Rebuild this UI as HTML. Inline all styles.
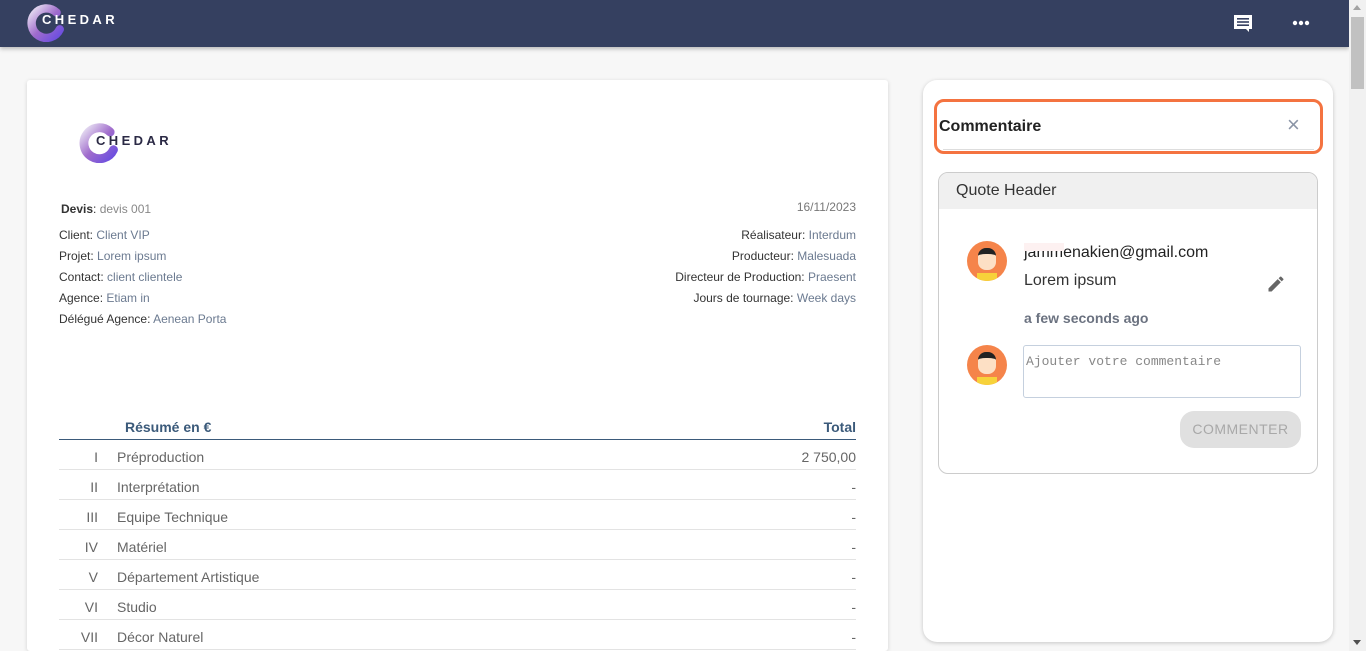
<!DOCTYPE html>
<html style="overflow:hidden;height:651px"><head><meta charset="utf-8"><style>
*{box-sizing:border-box;margin:0;padding:0}
body{width:1366px;height:651px;overflow:hidden;background:#f7f7f7;font-family:"Liberation Sans",Roboto,sans-serif;position:relative}
.hdr{position:absolute;left:0;top:0;width:1349px;height:47px;background:#354060;box-shadow:0 2px 4px rgba(0,0,0,.25)}
.sb{position:absolute;left:1349px;top:0;width:17px;height:651px;background:#f1f1f1}
.sb .th{position:absolute;left:2px;top:17px;width:13px;height:72px;background:#c1c1c1}
.card{position:absolute;left:27px;top:80px;width:861px;height:571px;background:#fff;box-shadow:0 1px 4px rgba(0,0,0,.15);border-radius:3px;overflow:hidden}
.side{position:absolute;left:923px;top:80px;width:410px;height:562px;background:#fff;border-radius:14px;box-shadow:0 1px 4px rgba(0,0,0,.2)}
.t{position:absolute;font-size:12px;color:#333;white-space:nowrap}
.t span{color:#6b7a90}
.row{position:absolute;left:32px;width:797px;height:30px;border-bottom:1px solid #e3e3e3;font-size:14px;color:#666}
.row .n{position:absolute;right:758px;top:9px}
.row .l{position:absolute;left:58px;top:9px}
.row .v{position:absolute;right:0;top:9px}
.logo{position:absolute;font-weight:bold;letter-spacing:3.4px}
</style></head><body>
<div class="hdr">
 <svg style="position:absolute;left:25px;top:2px" width="40" height="40" viewBox="0 0 38 38"><defs><linearGradient id="g" x1="0" y1="0" x2="1" y2="1"><stop offset="0" stop-color="#e9e3f3"/><stop offset=".5" stop-color="#a06ccc"/><stop offset="1" stop-color="#6a4de0"/></linearGradient></defs><path d="M30 10 A14 14 0 1 0 33 26" stroke="url(#g)" stroke-width="8" fill="none" stroke-linecap="round"/></svg>
 <div class="logo" style="left:42px;top:12px;color:#fff;font-size:13px">CHEDAR</div>
 <svg style="position:absolute;left:1233px;top:14px" width="20" height="20" viewBox="0 0 20 20"><path d="M1 1h18v14H16v3l-3-3H1z" fill="#fff"/><rect x="4" y="4" width="12" height="1.6" fill="#354060"/><rect x="4" y="7.2" width="12" height="1.6" fill="#354060"/><rect x="4" y="10.4" width="12" height="1.6" fill="#354060"/></svg>
 <svg style="position:absolute;left:1292px;top:20px" width="18" height="6"><circle cx="3" cy="3" r="2.2" fill="#fff"/><circle cx="9" cy="3" r="2.2" fill="#fff"/><circle cx="15" cy="3" r="2.2" fill="#fff"/></svg>
</div>
<div class="sb"><div class="th"></div><div style="position:absolute;left:4px;top:5px;border:4px solid transparent;border-bottom:5px solid #a3a3a3;border-top:0"></div><div style="position:absolute;left:4px;top:640px;border:4px solid transparent;border-top:5px solid #505050;border-bottom:0"></div></div>
<div class="card">
 <svg style="position:absolute;left:50px;top:41px" width="42" height="42" viewBox="0 0 38 38"><path d="M30 10 A14 14 0 1 0 33 26" stroke="url(#g)" stroke-width="8" fill="none" stroke-linecap="round"/></svg>
 <div class="logo" style="left:69px;top:53px;color:#2b2a45;font-size:13px">CHEDAR</div>
 <div class="t" style="left:34px;top:122px"><b>Devis</b>: <span style="color:#888">devis 001</span></div>
 <div class="t" style="right:32px;top:120px;color:#777">16/11/2023</div>
 <div class="t" style="left:32px;top:148px">Client: <span>Client VIP</span></div>
 <div class="t" style="left:32px;top:169px">Projet: <span>Lorem ipsum</span></div>
 <div class="t" style="left:32px;top:190px">Contact: <span>client clientele</span></div>
 <div class="t" style="left:32px;top:211px">Agence: <span>Etiam in</span></div>
 <div class="t" style="left:32px;top:232px">Délégué Agence: <span>Aenean Porta</span></div>
 <div class="t" style="right:32px;top:148px">Réalisateur: <span>Interdum</span></div>
 <div class="t" style="right:32px;top:169px">Producteur: <span>Malesuada</span></div>
 <div class="t" style="right:32px;top:190px">Directeur de Production: <span>Praesent</span></div>
 <div class="t" style="right:32px;top:211px">Jours de tournage: <span>Week days</span></div>
 <div style="position:absolute;left:32px;top:339px;width:797px;height:21px;border-bottom:1px solid #3b5a7a;font-size:14px;font-weight:bold;color:#3b5a7a">
  <div style="position:absolute;left:66px;top:0">Résumé en €</div><div style="position:absolute;right:0;top:0">Total</div></div>
 <div class="row" style="top:360px"><div class="n">I</div><div class="l">Préproduction</div><div class="v">2 750,00</div></div>
 <div class="row" style="top:390px"><div class="n">II</div><div class="l">Interprétation</div><div class="v">-</div></div>
 <div class="row" style="top:420px"><div class="n">III</div><div class="l">Equipe Technique</div><div class="v">-</div></div>
 <div class="row" style="top:450px"><div class="n">IV</div><div class="l">Matériel</div><div class="v">-</div></div>
 <div class="row" style="top:480px"><div class="n">V</div><div class="l">Département Artistique</div><div class="v">-</div></div>
 <div class="row" style="top:510px"><div class="n">VI</div><div class="l">Studio</div><div class="v">-</div></div>
 <div class="row" style="top:540px"><div class="n">VII</div><div class="l">Décor Naturel</div><div class="v">-</div></div>
</div>
<div class="side">
 <div style="position:absolute;left:11px;top:19px;width:389px;height:55px;border:3px solid #f47340;border-radius:10px">
  <div style="position:absolute;left:2px;top:16px;font-size:16px;font-weight:bold;color:#222">Commentaire</div>
  <div style="position:absolute;left:350px;top:10px;font-size:22px;color:#8a94a6">×</div>
  <div style="position:absolute;left:6px;right:6px;top:47px;border-top:1px solid #ddd"></div>
 </div>
 <div style="position:absolute;left:15px;top:92px;width:380px;height:302px;border:1px solid #ccc;border-radius:10px;overflow:hidden">
  <div style="height:36px;background:#f0f0f0;font-size:16px;color:#333;padding:9px 0 0 17px">Quote Header</div>
  <div style="position:absolute;left:28px;top:68px;width:40px;height:40px;border-radius:50%;background:#f5844a;overflow:hidden"><div style="position:absolute;left:11px;top:7px;width:18px;height:22px;background:#fde0c5;border-radius:8px;border-top:6px solid #222"></div><div style="position:absolute;left:10px;top:32px;width:20px;height:10px;background:#f7d23a"></div></div>
  <div style="position:absolute;left:85px;top:71px;font-size:16px;color:#222">jammenakien@gmail.com</div>
  <div style="position:absolute;left:85px;top:70px;width:40px;height:8px;background:#fdf1f1"></div>
  <div style="position:absolute;left:85px;top:99px;font-size:16px;color:#333">Lorem ipsum</div>
  <svg style="position:absolute;left:327px;top:101px" width="20" height="20" viewBox="0 0 24 24"><path d="M3 17.25V21h3.75L17.8 9.94l-3.75-3.75zM20.7 7.04a1 1 0 000-1.41l-2.34-2.34a1 1 0 00-1.41 0l-1.83 1.83 3.75 3.75z" fill="#666"/></svg>
  <div style="position:absolute;left:85px;top:137px;font-size:14px;font-weight:bold;color:#6b7280">a few seconds ago</div>
  <div style="position:absolute;left:28px;top:172px;width:40px;height:40px;border-radius:50%;background:#f5844a;overflow:hidden"><div style="position:absolute;left:11px;top:7px;width:18px;height:22px;background:#fde0c5;border-radius:8px;border-top:6px solid #222"></div><div style="position:absolute;left:10px;top:32px;width:20px;height:10px;background:#f7d23a"></div></div>
  <div style="position:absolute;left:84px;top:172px;width:278px;height:53px;border:1px solid #c5d0de;border-radius:3px;font-family:'Liberation Mono',monospace;font-size:13px;color:#888;padding:8px 2px">Ajouter votre commentaire</div>
  <div style="position:absolute;left:241px;top:238px;width:121px;height:37px;border-radius:14px;background:#e0e0e0;color:#a8a8a8;font-size:14px;text-align:center;line-height:37px;letter-spacing:.5px">COMMENTER</div>
 </div>
</div>
</body></html>
